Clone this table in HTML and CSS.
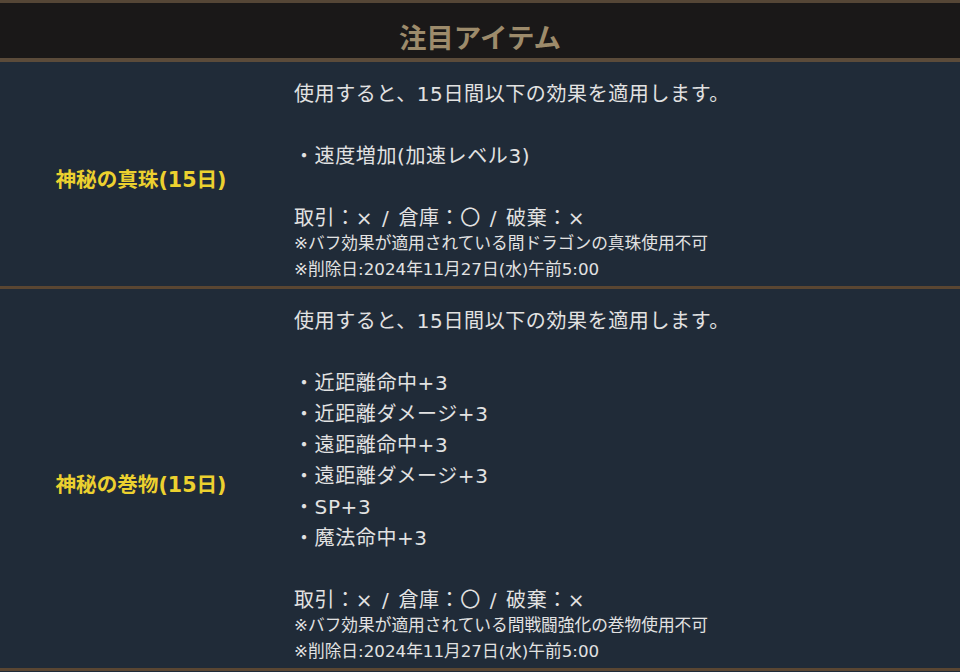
FILE: index.html
```html
<!DOCTYPE html>
<html lang="ja">
<head>
<meta charset="utf-8">
<link rel="stylesheet" href="styles.css">
</head>
<body>
<div class="panel">
  <div class="head">注目アイテム</div>
  <div class="row">
    <div class="name">神秘の真珠(15日)</div>
    <div class="desc">
      <p class="main">使用すると、15日間以下の効果を適用します。</p>
      <p class="main">&nbsp;</p>
      <p class="main">・速度増加(加速レベル3)</p>
      <p class="main">&nbsp;</p>
      <p class="main trade">取引：× / 倉庫：〇 / 破棄：×</p>
      <p class="note">※バフ効果が適用されている間ドラゴンの真珠使用不可</p>
      <p class="note">※削除日:2024年11月27日(水)午前5:00</p>
    </div>
  </div>
  <div class="row">
    <div class="name">神秘の巻物(15日)</div>
    <div class="desc">
      <p class="main">使用すると、15日間以下の効果を適用します。</p>
      <p class="main">&nbsp;</p>
      <p class="main">・近距離命中+3</p>
      <p class="main">・近距離ダメージ+3</p>
      <p class="main">・遠距離命中+3</p>
      <p class="main">・遠距離ダメージ+3</p>
      <p class="main">・SP+3</p>
      <p class="main">・魔法命中+3</p>
      <p class="main">&nbsp;</p>
      <p class="main trade">取引：× / 倉庫：〇 / 破棄：×</p>
      <p class="note">※バフ効果が適用されている間戦闘強化の巻物使用不可</p>
      <p class="note">※削除日:2024年11月27日(水)午前5:00</p>
    </div>
  </div>
</div>
</body>
</html>
```
FILE: styles.css
```css
html, body {
  margin: 0;
  padding: 0;
  background: #202b38;
}
body {
  font-family: "DejaVu Sans", "Noto Sans CJK JP", sans-serif;
  color: #e2e2e2;
}
.panel {
  border-top: 3px solid #554636;
}
.head {
  background: #1a1818;
  color: #9d8b6b;
  font-family: "Noto Sans CJK JP", sans-serif;
  font-weight: bold;
  font-size: 27.5px;
  text-align: center;
  height: 55px;
  line-height: 66px;
  border-bottom: 4px solid #5b4b3a;
}
.row {
  display: flex;
  align-items: center;
  border-bottom: 3px solid #5a4632;
}
.name {
  width: 282px;
  flex: none;
  text-align: center;
  color: #ecd12f;
  font-weight: bold;
  font-size: 20.6px;
  padding-top: 8px;
}
.desc {
  padding: 17px 0 4px 12px;
}
.desc p {
  margin: 0;
  white-space: pre;
}
.main {
  font-size: 20px;
  line-height: 31px;
  letter-spacing: 0.6px;
}
.trade {
  word-spacing: 2px;
}
.note {
  font-size: 16.7px;
  line-height: 26px;
}
.main + .note {
  margin-top: -4px;
}
```
